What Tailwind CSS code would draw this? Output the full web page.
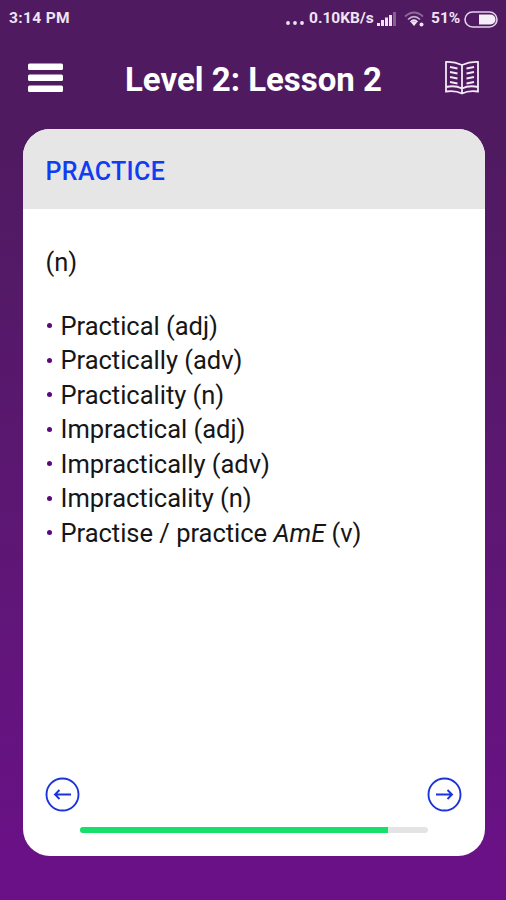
<!DOCTYPE html>
<html lang="en">
<head>
<meta charset="utf-8">
<title>Level 2: Lesson 2</title>
<script src="https://cdn.jsdelivr.net/npm/@tailwindcss/browser@4"></script>
</head>
<body class="flex h-[900px] w-[506px] flex-col overflow-hidden bg-linear-to-b from-[#4f1a60] from-15% to-[#6b1088] font-[Roboto,sans-serif]">
<div class="flex h-[38px] shrink-0 items-center justify-between pr-[8px] pl-[9px] text-[15.500px] font-bold text-[#f0e4f4]">
  <span class="tracking-[0.350px]">3:14 PM</span>
  <div class="flex items-center">
    <svg class="mt-[8px] mr-[5px]" width="18" height="4" fill="currentColor"><circle cx="2" cy="2" r="1.9"/><circle cx="9" cy="2" r="1.9"/><circle cx="16" cy="2" r="1.9"/></svg>
    <span class="w-[66px] whitespace-nowrap">0.10KB/s</span>
    <svg class="ml-[2px]" width="20" height="14" fill="currentColor"><path d="M0 11h3v3H0zM4 8h3v6H4zM8 5.500h3v8.500H8zM12 3h3v11h-3z"/><path opacity=".35" d="M16 0h3v14h-3z"/></svg>
    <svg class="ml-[7px]" width="21" height="16" fill="none" stroke="currentColor" stroke-width="1.700"><path opacity=".4" d="M1 5.500Q10 -2.500 19 5.500"/><path opacity=".75" d="M4 8.500Q10 2.700 16 8.500"/><path d="M6.500 11Q10 7.500 13.500 11"/><path fill="currentColor" stroke="none" d="M7 11.500Q10 9 13 11.500L10 15z"/><circle cx="17.500" cy="13.500" r="2" fill="currentColor" stroke="none"/></svg>
    <span class="ml-[6px] w-[31px] whitespace-nowrap">51%</span>
    <svg class="ml-[2px]" width="34" height="17"><rect x="1" y="1" width="32" height="15" rx="7.500" fill="none" stroke="#e3d0e9" stroke-width="1.600"/><path d="M15 3.500h11.500a4.500 4.500 0 0 1 0 10H15z" fill="#f5edf7"/></svg>
  </div>
</div>
<header class="flex h-[91px] shrink-0 items-start justify-between pr-[26px] pl-[28px] text-white">
  <svg class="mt-[25px]" width="35" height="30" fill="currentColor"><rect y="0.500" width="35" height="6.500" rx="1.500"/><rect y="11.500" width="35" height="6.500" rx="1.500"/><rect y="22.500" width="35" height="6.500" rx="1.500"/></svg>
  <h1 class="mt-[22px] text-[33px] leading-[40px] font-bold whitespace-nowrap">Level 2: Lesson 2</h1>
  <svg class="mt-[22px]" width="36" height="36" fill="none" stroke="#f3eaf6" stroke-width="1.800"><path d="M18 5Q10 1.500 2 2V31.500Q11 30 18 33.500Q25 30 34 31.500V2Q26 1.500 18 5V33M2 27Q11 25 18 28.500Q25 25 34 27"/><path d="M6 7l7.500 1.500M6 12l7.500 1.500M6 17l7.500 1.500M6 22l7.500 1.500M30 7l-7.500 1.500M30 12l-7.500 1.500M30 17l-7.500 1.500M30 22l-7.500 1.500"/></svg>
</header>
<main class="ml-[22.500px] flex h-[726.500px] w-[462px] shrink-0 flex-col overflow-hidden rounded-[27px] bg-white text-[25.500px] text-[#161616]">
  <h2 class="flex h-[80px] shrink-0 items-center bg-[#e6e6e6] pt-[5px] pl-[23px] text-[25px] font-medium tracking-[0.350px] text-[#123cf2]">PRACTICE</h2>
  <p class="mt-[35.500px] ml-[23px] leading-[34.500px]">(n)</p>
  <ul class="mt-[29.500px] ml-[24.500px] leading-[34.500px] tracking-[-0.020px] whitespace-nowrap">
    <li class="flex items-center gap-[8.500px]"><i class="size-[5px] rounded-full bg-[#5c087a]"></i><span>Practical (adj)</span></li>
    <li class="flex items-center gap-[8.500px]"><i class="size-[5px] rounded-full bg-[#5c087a]"></i><span>Practically (adv)</span></li>
    <li class="flex items-center gap-[8.500px]"><i class="size-[5px] rounded-full bg-[#5c087a]"></i><span>Practicality (n)</span></li>
    <li class="flex items-center gap-[8.500px]"><i class="size-[5px] rounded-full bg-[#5c087a]"></i><span>Impractical (adj)</span></li>
    <li class="flex items-center gap-[8.500px]"><i class="size-[5px] rounded-full bg-[#5c087a]"></i><span>Impractically (adv)</span></li>
    <li class="flex items-center gap-[8.500px]"><i class="size-[5px] rounded-full bg-[#5c087a]"></i><span>Impracticality (n)</span></li>
    <li class="flex items-center gap-[8.500px]"><i class="size-[5px] rounded-full bg-[#5c087a]"></i><span>Practise / practice <em>AmE</em> (v)</span></li>
  </ul>
  <div class="mt-auto flex justify-between px-[22.500px]">
    <svg width="35" height="35" fill="none" stroke="#1c33dc" stroke-width="1.900"><circle cx="17.500" cy="17.500" r="16"/><path d="M26 17.500H10M14.500 13l-4.500 4.500 4.500 4.500"/></svg>
    <svg width="35" height="35" fill="none" stroke="#1c33dc" stroke-width="1.900"><circle cx="17.500" cy="17.500" r="16"/><path d="M9 17.500h16M20.500 13l4.500 4.500-4.500 4.500"/></svg>
  </div>
  <div class="mx-[57px] mt-[15px] mb-[23px] h-[6px] shrink-0 overflow-hidden rounded-full bg-[#e4e4e4]"><div class="h-full w-[308px] bg-[#17df6b]"></div></div>
</main>
</body>
</html>
